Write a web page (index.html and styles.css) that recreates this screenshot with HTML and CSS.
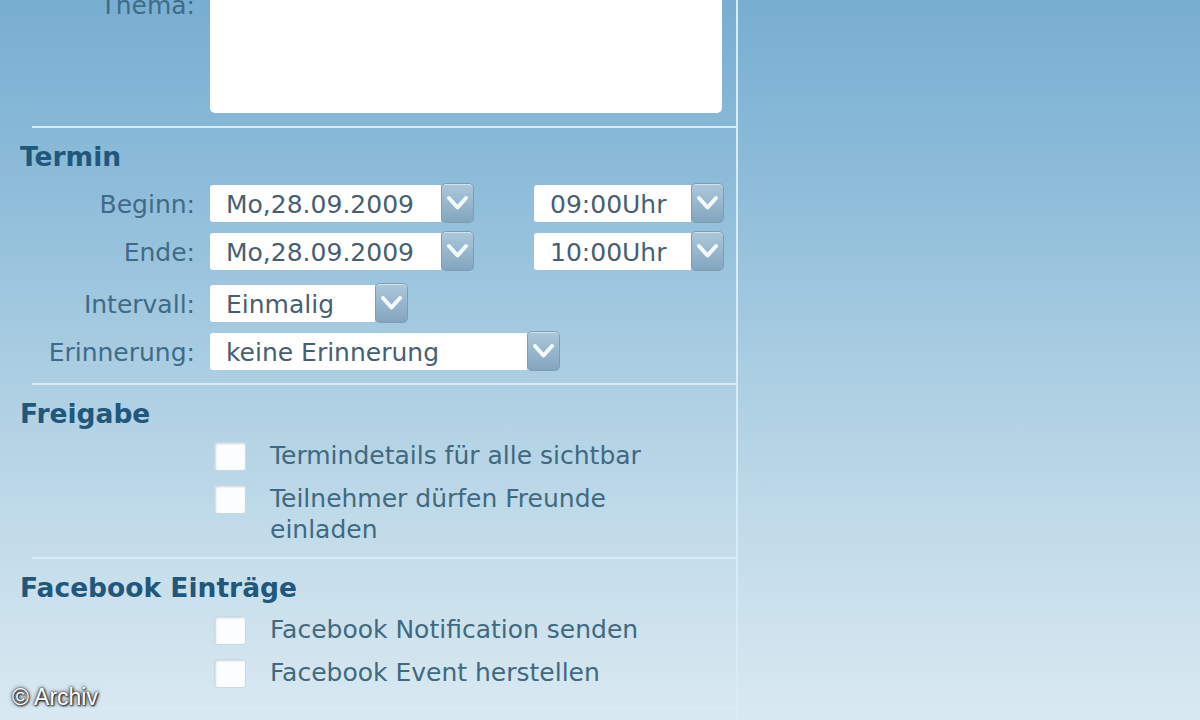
FILE: index.html
```html
<!DOCTYPE html>
<html lang="de">
<head>
<meta charset="utf-8">
<title>Termin</title>
<link rel="stylesheet" href="styles.css">
</head>
<body>
<div class="page">
  <div class="panel">
    <div class="row row-thema">
      <span class="lbl">Thema:</span>
      <div class="textarea"></div>
    </div>
    <hr class="sep">

    <h2 class="heading">Termin</h2>
    <div class="rows">
      <div class="row">
        <span class="lbl">Beginn:</span>
        <div class="fields">
          <div class="select"><span class="val w-date">Mo,28.09.2009</span><span class="btn"><svg viewBox="0 0 33 40" width="33" height="40"><path d="M8 15 L16.5 24.5 L25 15" /></svg></span></div>
          <div class="select gap-time"><span class="val w-time">09:00Uhr</span><span class="btn"><svg viewBox="0 0 33 40" width="33" height="40"><path d="M8 15 L16.5 24.5 L25 15" /></svg></span></div>
        </div>
      </div>
      <div class="row row-wide">
        <span class="lbl">Ende:</span>
        <div class="fields">
          <div class="select"><span class="val w-date">Mo,28.09.2009</span><span class="btn"><svg viewBox="0 0 33 40" width="33" height="40"><path d="M8 15 L16.5 24.5 L25 15" /></svg></span></div>
          <div class="select gap-time"><span class="val w-time">10:00Uhr</span><span class="btn"><svg viewBox="0 0 33 40" width="33" height="40"><path d="M8 15 L16.5 24.5 L25 15" /></svg></span></div>
        </div>
      </div>
      <div class="row">
        <span class="lbl">Intervall:</span>
        <div class="fields">
          <div class="select"><span class="val w-int">Einmalig</span><span class="btn"><svg viewBox="0 0 33 40" width="33" height="40"><path d="M8 15 L16.5 24.5 L25 15" /></svg></span></div>
        </div>
      </div>
      <div class="row">
        <span class="lbl">Erinnerung:</span>
        <div class="fields">
          <div class="select"><span class="val w-rem">keine Erinnerung</span><span class="btn"><svg viewBox="0 0 33 40" width="33" height="40"><path d="M8 15 L16.5 24.5 L25 15" /></svg></span></div>
        </div>
      </div>
    </div>
    <hr class="sep">

    <h2 class="heading">Freigabe</h2>
    <div class="checks">
      <div class="check"><span class="box"></span><span class="ctext">Termindetails für alle sichtbar</span></div>
      <div class="check"><span class="box"></span><span class="ctext">Teilnehmer dürfen Freunde<br>einladen</span></div>
    </div>
    <hr class="sep">

    <h2 class="heading">Facebook Einträge</h2>
    <div class="checks checks-last">
      <div class="check"><span class="box"></span><span class="ctext">Facebook Notification senden</span></div>
      <div class="check"><span class="box"></span><span class="ctext">Facebook Event herstellen</span></div>
    </div>
    <hr class="sep">
  </div>
  <div class="side"></div>
  <div class="credit">© Archiv</div>
</div>
</body>
</html>
```

FILE: styles.css
```css
* { box-sizing: border-box; }
html, body { margin: 0; padding: 0; }
body {
  width: 1200px;
  height: 720px;
  overflow: hidden;
  font-family: "DejaVu Sans", Verdana, sans-serif;
  background: linear-gradient(180deg, #78aed1 0%, #8dbcd9 25%, #a9cde2 50%, #c3dcea 75%, #d9e9f1 100%);
}
.page {
  position: relative;
  width: 1200px;
  height: 720px;
  display: flex;
}
.panel {
  width: 738px;
  height: 750px;
  border-right: 2px solid #d6ecf7;
  margin-top: -30px;
}
.side { flex: 1; }

.row {
  display: grid;
  grid-template-columns: 195px 1fr;
  column-gap: 15px;
  align-items: center;
  height: 40px;
  margin-bottom: 8px;
}
.row-wide { margin-bottom: 12px; }
.lbl {
  text-align: right;
  font-size: 25px;
  color: #3f6b89;
  line-height: 30px;
  padding-top: 3px;
  white-space: nowrap;
}
.row-thema {
  height: auto;
  align-items: start;
  margin-bottom: 13px;
}
.row-thema .lbl { padding-top: 21px; }
.textarea {
  width: 512px;
  height: 143px;
  background: #fff;
  border-radius: 0 0 5px 5px;
}

.sep {
  border: 0;
  height: 2px;
  margin: 0 0 0 32px;
  background: #d8ecf7;
}

.heading {
  margin: 14px 0 11px 20px;
  font-size: 26.5px;
  line-height: 30px;
  font-weight: bold;
  color: #22577c;
}

.rows { padding-bottom: 4px; }

.fields { display: flex; align-items: center; }
.select { display: flex; align-items: center; }
.gap-time { margin-left: 60px; }
.val {
  display: block;
  height: 37px;
  line-height: 40px;
  padding-left: 16px;
  background: #fff;
  border-radius: 3px 0 0 3px;
  font-size: 25px;
  color: #475f73;
  white-space: nowrap;
  overflow: hidden;
}
.w-date { width: 231px; }
.w-time { width: 157px; }
.w-int { width: 165px; }
.w-rem { width: 317px; }
.btn {
  display: block;
  width: 33px;
  height: 40px;
  border-radius: 5px;
  border: 1px solid #7d9db6;
  background: linear-gradient(180deg, #abc7da 0%, #98b7ce 50%, #83a5bf 100%);
  box-shadow: inset 0 1px 0 rgba(255,255,255,0.5);
}
.btn svg { display: block; margin: -1px; }
.btn path {
  fill: none;
  stroke: #f4f9fc;
  stroke-width: 4;
  stroke-linecap: round;
  stroke-linejoin: round;
}

.checks { padding-bottom: 12px; }
.checks-last { padding-bottom: 19px; }
.check {
  display: flex;
  align-items: flex-start;
  padding-left: 214px;
  margin-bottom: 12px;
}
.check:last-child { margin-bottom: 0; }
.box {
  flex: none;
  width: 32px;
  height: 29px;
  margin-top: 2px;
  background: #fbfdfe;
  border-radius: 3px;
  border: 1px solid #c9d9e3;
  box-shadow: inset 1px 1px 2px rgba(120,140,160,0.35);
}
.ctext {
  margin-left: 24px;
  font-size: 25px;
  line-height: 31px;
  color: #41697f;
}

.credit {
  position: absolute;
  left: 12px;
  top: 684px;
  font-family: "Liberation Sans", Arial, sans-serif;
  font-size: 23px;
  color: #ffffff;
  text-shadow: 0 0 2px #222, 0 0 4px #333, 1px 1px 2px #111;
}
```
